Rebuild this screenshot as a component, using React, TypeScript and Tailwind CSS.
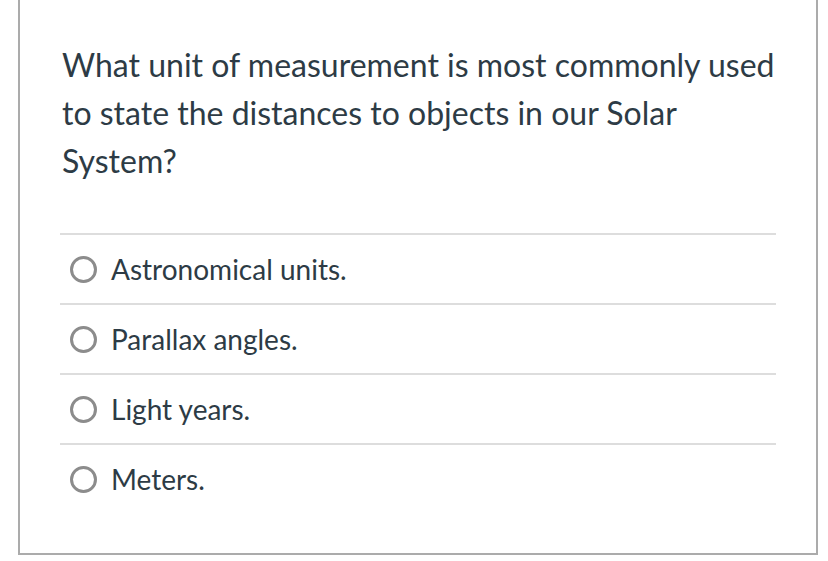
const answers = [
  "Astronomical units.",
  "Parallax angles.",
  "Light years.",
  "Meters.",
];

export default function App() {
  return (
    <div className="min-h-screen bg-white font-['Lato',sans-serif] text-[#2d3b45]">
      <div className="ml-[18px] w-[800px] border-x-2 border-b-2 border-[#ababab] bg-white px-[40px] pb-[40px] pt-[41px]">
        {/* Question */}
        <p className="pl-[2px] text-[32px] leading-[48px]">
          What unit of measurement is most commonly used to state the
          distances to objects in our Solar System?
        </p>

        {/* Answers */}
        <div className="mt-[48px]">
          {answers.map((a) => (
            <label
              key={a}
              className="flex h-[70px] items-center gap-[14px] border-t-2 border-[#dddddd] pl-[10px]"
            >
              <span className="block h-[27px] w-[27px] rounded-full border-[3px] border-[#8c8c8c]" />
              <span className="text-[28px] leading-[34px]">{a}</span>
            </label>
          ))}
        </div>
      </div>
    </div>
  );
}
